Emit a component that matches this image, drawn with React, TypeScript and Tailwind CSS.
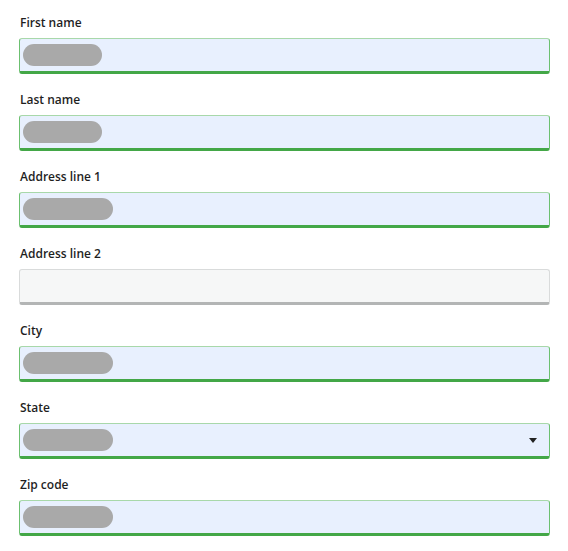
const fields: { label: string; pill?: number; select?: boolean }[] = [
  { label: "First name", pill: 79 },
  { label: "Last name", pill: 79 },
  { label: "Address line 1", pill: 90 },
  { label: "Address line 2" },
  { label: "City", pill: 90 },
  { label: "State", pill: 90, select: true },
  { label: "Zip code", pill: 90 },
];

function Field({ label, pill, select }: { label: string; pill?: number; select?: boolean }) {
  const filled = pill !== undefined;
  return (
    <div className="flex flex-col">
      <label className="h-[18px] pl-px text-[12px] leading-[18px] font-semibold text-[#1f1f1f]">{label}</label>
      <div
        className={
          "mt-[6px] h-[36px] rounded-[3px] border border-b-[3px] flex items-center px-[3px] " +
          (filled
            ? "bg-[#e8f0fe] border-[#a8d8aa] border-l-[#6cc070] border-r-[#6cc070] border-b-[#43a747]"
            : "bg-[#f6f7f7] border-[#d9dbdb] border-b-[#b3b5b5]")
        }
      >
        {filled && <div className="h-[22px] rounded-full bg-[#a9a9a9]" style={{ width: pill }} />}
        {select && (
          <svg className="ml-auto mr-[9px]" width="8" height="5" viewBox="0 0 8 5">
            <path d="M0 0h8L4 5z" fill="#222" />
          </svg>
        )}
      </div>
    </div>
  );
}

export default function App() {
  return (
    <div className="bg-white w-[568px] h-[551px] pt-[14px] pl-[19px] pr-[18px]" style={{ fontFamily: '"Open Sans", sans-serif' }}>
      <div className="flex flex-col gap-[17px]">
        {fields.map((f) => (
          <Field key={f.label} {...f} />
        ))}
      </div>
    </div>
  );
}
